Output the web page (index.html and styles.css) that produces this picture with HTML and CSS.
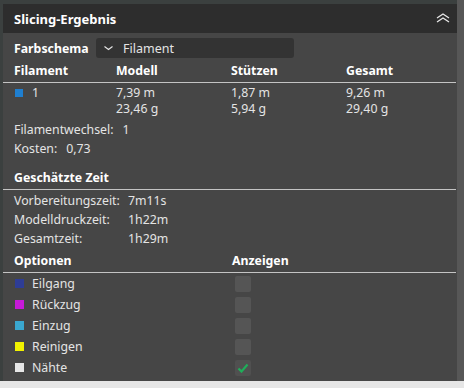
FILE: index.html
```html
<!DOCTYPE html>
<html lang="de">
<head>
    <meta charset="UTF-8">
    <title>Slicing-Ergebnis</title>
    <link rel="stylesheet" href="styles.css">
</head>
<body>
    <div class="frame">
        <div class="panel">
            <div class="panel-header">
                <span class="panel-title">Slicing-Ergebnis</span>
                <svg class="collapse" width="14" height="10" viewBox="0 0 14 10">
                    <path d="M1 5 L7 1 L13 5 M1 9 L7 5 L13 9" fill="none" stroke="#e8e8e8" stroke-width="1.3"/>
                </svg>
            </div>

            <div class="panel-body">
                <!-- Farbschema -->
                <div class="scheme-row">
                    <span class="bold scheme-label">Farbschema</span>
                    <div class="combo">
                        <svg width="11" height="6" viewBox="0 0 11 6">
                            <path d="M1.5 1.5 L5.5 4.5 L9.5 1.5" fill="none" stroke="#e8e8e8" stroke-width="1.1"/>
                        </svg>
                        <span>Filament</span>
                    </div>
                </div>

                <!-- Filament-Tabelle -->
                <div class="section-head table-grid">
                    <span class="bold">Filament</span>
                    <span class="bold">Modell</span>
                    <span class="bold">Stützen</span>
                    <span class="bold">Gesamt</span>
                </div>
                <div class="table-grid data-row">
                    <span><i class="swatch" style="background: #1f7fd0;"></i>1</span>
                    <span>7,39 m<br>23,46 g</span>
                    <span>1,87 m<br>5,94 g</span>
                    <span>9,26 m<br>29,40 g</span>
                </div>
                <div class="info-line">Filamentwechsel:<span class="val">1</span></div>
                <div class="info-line">Kosten:<span class="val">0,73</span></div>

                <!-- Zeit -->
                <div class="section-head time-head">
                    <span class="bold">Geschätzte Zeit</span>
                </div>
                <div class="time-list">
                    <div class="time-row"><span>Vorbereitungszeit:</span><span>7m11s</span></div>
                    <div class="time-row"><span>Modelldruckzeit:</span><span>1h22m</span></div>
                    <div class="time-row"><span>Gesamtzeit:</span><span>1h29m</span></div>
                </div>

                <!-- Optionen -->
                <div class="section-head options-grid options-head">
                    <span class="bold">Optionen</span>
                    <span class="bold">Anzeigen</span>
                </div>
                <div class="options-grid option-row">
                    <span><i class="swatch" style="background: #2e3d96;"></i>Eilgang</span>
                    <span class="check"></span>
                </div>
                <div class="options-grid option-row">
                    <span><i class="swatch" style="background: #c61ad8;"></i>Rückzug</span>
                    <span class="check"></span>
                </div>
                <div class="options-grid option-row">
                    <span><i class="swatch" style="background: #3aa7cf;"></i>Einzug</span>
                    <span class="check"></span>
                </div>
                <div class="options-grid option-row">
                    <span><i class="swatch" style="background: #f2f200;"></i>Reinigen</span>
                    <span class="check"></span>
                </div>
                <div class="options-grid option-row">
                    <span><i class="swatch" style="background: #e6e6e6;"></i>Nähte</span>
                    <span class="check checked">
                        <svg width="12" height="10" viewBox="0 0 12 10">
                            <path d="M1.5 5.5 L4.5 8.5 L10.5 1.5" fill="none" stroke="#1fae5a" stroke-width="2.2"/>
                        </svg>
                    </span>
                </div>
            </div>
        </div>
    </div>
</body>
</html>
```

FILE: styles.css
```css
body {
    margin: 0;
    background-color: #e6e6e6;
    font-family: 'Noto Sans', 'Open Sans', sans-serif;
    font-size: 12.3px;
    color: #e4e4e4;
}
.frame {
    background-color: #3b403f;
    padding: 4px 7px 0 3px;
    height: 377px;
    box-shadow: inset -7px 0 0 #575757;
}
.panel {
    background-color: #464646;
    height: 377px;
}
.panel-header {
    height: 29px;
    background-color: #2d2d2d;
    display: flex;
    align-items: center;
    justify-content: space-between;
    padding: 0 7px 0 11px;
}
.panel-title {
    font-weight: bold;
    color: #ffffff;
    font-size: 13px;
}
.collapse {
    margin-bottom: 1px;
}
.bold {
    font-weight: bold;
    color: #ffffff;
}
.panel-body {
    padding-top: 5px;
}
.scheme-row {
    display: flex;
    align-items: center;
    padding-left: 11px;
    height: 20px;
}
.scheme-label {
    width: 82px;
}
.combo {
    width: 198px;
    height: 20px;
    background-color: #333333;
    border-radius: 3px;
    display: flex;
    align-items: center;
    gap: 9px;
    padding-left: 7px;
    box-sizing: border-box;
    font-size: 12.5px;
}
.section-head {
    line-height: 18px;
    padding: 0 11px 2px;
    border-bottom: 1px solid #c4c4c4;
    margin-right: 1px;
}
.scheme-row + .section-head {
    margin-top: 4px;
}
.table-grid {
    display: grid;
    grid-template-columns: 102px 115px 115px 1fr;
    padding-left: 11px;
}
.data-row {
    line-height: 16px;
    margin-top: 2px;
}
.swatch {
    display: inline-block;
    width: 8px;
    height: 8px;
    margin: 0 9px 0 1px;
    vertical-align: 0;
}
.info-line {
    line-height: 19px;
    padding-left: 11px;
}
.data-row + .info-line {
    margin-top: 3px;
}
.val {
    margin-left: 9px;
}
.time-head {
    margin-top: 11px;
}
.time-list {
    margin-top: 1px;
    padding-left: 11px;
}
.time-row {
    display: grid;
    grid-template-columns: 114px 1fr;
    line-height: 19px;
}
.options-grid {
    display: grid;
    grid-template-columns: 218px 1fr;
    padding-left: 11px;
}
.options-head {
    margin-top: 4px;
}
.option-row {
    height: 21px;
    align-items: center;
}
.option-row .swatch {
    width: 9px;
    height: 9px;
    margin-right: 8px;
}
.check {
    width: 16px;
    height: 16px;
    margin-left: 3px;
    background-color: #555555;
    border-radius: 2px;
    display: flex;
    align-items: center;
    justify-content: center;
}
.checked {
    background-color: #505050;
}
```
